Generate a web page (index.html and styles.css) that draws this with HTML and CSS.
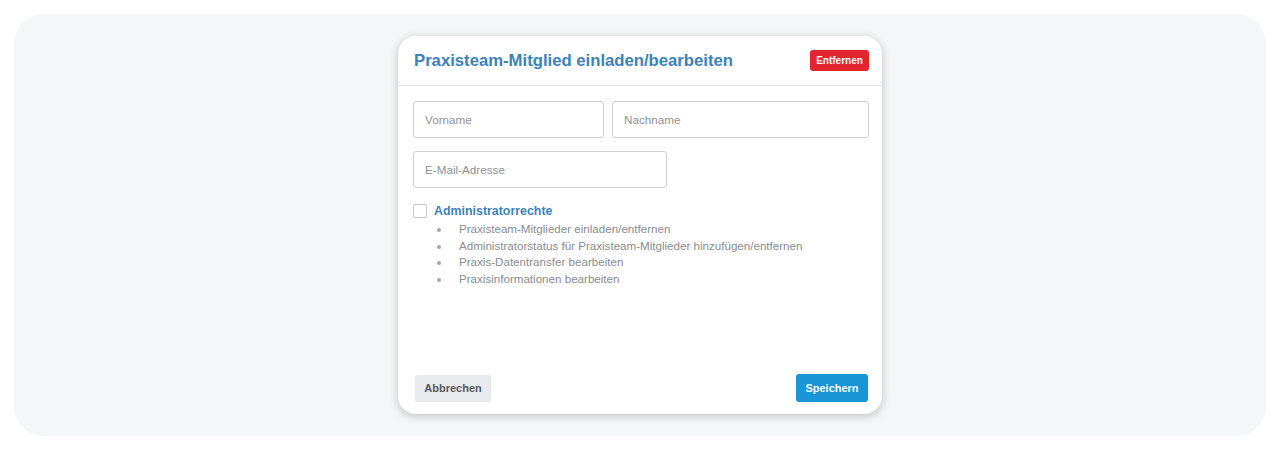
FILE: index.html
```html
<!DOCTYPE html>
<html lang="de">
<head>
<meta charset="utf-8">
<link rel="stylesheet" href="styles.css">
</head>
<body>
<div class="page">
  <div class="panel">
    <div class="modal">
      <div class="modal-header">
        <h1 class="title">Praxisteam-Mitglied einladen/bearbeiten</h1>
        <button class="btn btn-danger">Entfernen</button>
      </div>
      <div class="modal-body">
        <div class="row">
          <input class="field field-first" type="text" placeholder="Vorname">
          <input class="field field-last" type="text" placeholder="Nachname">
        </div>
        <div class="row">
          <input class="field field-email" type="text" placeholder="E-Mail-Adresse">
        </div>
        <div class="admin">
          <label class="admin-label"><span class="checkbox"></span><span class="admin-text">Administratorrechte</span></label>
          <ul class="rights">
            <li>Praxisteam-Mitglieder einladen/entfernen</li>
            <li>Administratorstatus für Praxisteam-Mitglieder hinzufügen/entfernen</li>
            <li>Praxis-Datentransfer bearbeiten</li>
            <li>Praxisinformationen bearbeiten</li>
          </ul>
        </div>
      </div>
      <div class="modal-footer">
        <button class="btn btn-secondary">Abbrechen</button>
        <button class="btn btn-primary">Speichern</button>
      </div>
    </div>
  </div>
</div>
</body>
</html>
```

FILE: styles.css
```css
* { box-sizing: border-box; }
html, body { margin: 0; padding: 0; background: #ffffff; }
body { font-family: "Liberation Sans", Arial, sans-serif; }

.page { padding: 14px; }

.panel {
  height: 422px;
  background: #f5f6f8;
  border-radius: 30px;
  display: flex;
  justify-content: center;
  padding-top: 22px;
}

.modal {
  width: 484px;
  height: 378px;
  background: #ffffff;
  border-radius: 18px;
  box-shadow: 0 2px 10px rgba(0, 0, 0, 0.22);
  display: flex;
  flex-direction: column;
}

.modal-header {
  height: 50px;
  border-bottom: 1px solid #e3e5e8;
  display: flex;
  align-items: center;
  justify-content: space-between;
  padding: 1px 13px 0 16px;
}

.title {
  margin: 0;
  font-size: 16.7px;
  font-weight: 700;
  color: #3d82b8;
  letter-spacing: 0;
}

.btn {
  font-family: "Liberation Sans", Arial, sans-serif;
  border: none;
  border-radius: 3px;
  font-weight: 700;
  cursor: pointer;
}

.btn-danger {
  background: #e3252f;
  color: #ffffff;
  font-size: 10px;
  height: 21px;
  width: 59px;
  padding: 0;
  margin-bottom: 1px;
}

.modal-body {
  flex: 1;
  padding: 15px 13px 0 15px;
}

.row {
  display: flex;
  gap: 8px;
  margin-bottom: 13px;
}

.field {
  height: 37px;
  border: 1px solid #cfd2d6;
  border-radius: 3px;
  padding: 0 11px;
  font-family: "Liberation Sans", Arial, sans-serif;
  font-size: 11.7px;
  color: #333;
  background: #fff;
  outline: none;
}
.field::placeholder { color: #8f9194; }
.field-first { width: 191px; }
.field-last { width: 257px; }
.field-email { width: 254px; }

.admin { margin-top: 16px; }

.admin-label {
  display: flex;
  align-items: center;
  gap: 7px;
}

.checkbox {
  width: 14px;
  height: 14px;
  border: 1px solid #c4c7cb;
  border-radius: 2px;
  background: #fff;
}

.admin-text {
  font-size: 12.4px;
  font-weight: 700;
  color: #3d82b8;
}

.rights {
  margin: 3px 0 0 0;
  padding-left: 46px;
  list-style: none;
}

.rights li {
  position: relative;
  font-size: 11.6px;
  line-height: 16.7px;
  color: #8a8c8f;
}
.rights li::before {
  content: "";
  position: absolute;
  left: -22px;
  top: 7px;
  width: 4px;
  height: 4px;
  border-radius: 50%;
  background: #a3a5a8;
}

.modal-footer {
  display: flex;
  justify-content: space-between;
  align-items: center;
  padding: 0 14px 12px 17px;
}

.btn-secondary {
  background: #e8eaed;
  color: #55585c;
  font-size: 11px;
  height: 27px;
  width: 76px;
  padding: 0;
}

.btn-primary {
  background: #1a95d6;
  color: #ffffff;
  font-size: 11px;
  height: 28px;
  width: 72px;
  padding: 0;
}
```
